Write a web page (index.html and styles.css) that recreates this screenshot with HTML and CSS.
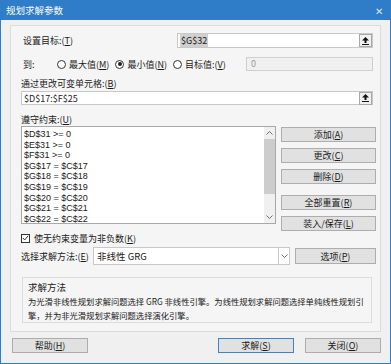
FILE: index.html
```html
<!DOCTYPE html>
<html lang="zh-CN">
<head>
    <meta charset="UTF-8">
    <title>规划求解参数</title>
    <link rel="stylesheet" href="styles.css">
</head>
<body>
    <div class="window">
        <div class="titlebar">
            <span class="title">规划求解参数</span>
            <span class="close">✕</span>
        </div>
        <div class="panel">
            <div class="row target-row">
                <label class="label">设置目标:(<u>T</u>)</label>
                <div class="ref-input target-input">
                    <span class="selected">$G$32</span>
                    <span class="ref-btn"><svg width="7" height="8" viewBox="0 0 7 8"><path d="M3.5 0 L7 3.5 L4.5 3.5 L4.5 6 L2.5 6 L2.5 3.5 L0 3.5 Z M0 7 H7 V8 H0 Z" fill="#111"/></svg></span>
                </div>
            </div>
            <div class="row to-row">
                <span class="label to-label">到:</span>
                <span class="radio"><span class="circle"></span><span>最大值(<u>M</u>)</span></span>
                <span class="radio"><span class="circle checked"></span><span>最小值(<u>N</u>)</span></span>
                <span class="radio"><span class="circle"></span><span>目标值:(<u>V</u>)</span></span>
                <div class="value-input">0</div>
            </div>
            <div class="label section-label">通过更改可变单元格:(<u>B</u>)</div>
            <div class="ref-input cells-input">
                <span>$D$17:$F$25</span>
                <span class="ref-btn"><svg width="7" height="8" viewBox="0 0 7 8"><path d="M3.5 0 L7 3.5 L4.5 3.5 L4.5 6 L2.5 6 L2.5 3.5 L0 3.5 Z M0 7 H7 V8 H0 Z" fill="#111"/></svg></span>
            </div>
            <div class="label section-label constraint-label">遵守约束:(<u>U</u>)</div>
            <div class="constraints">
                <div class="listbox">
                    <div class="items">
                        <div>$D$31 &gt;= 0</div>
                        <div>$E$31 &gt;= 0</div>
                        <div>$F$31 &gt;= 0</div>
                        <div>$G$17 = $C$17</div>
                        <div>$G$18 = $C$18</div>
                        <div>$G$19 = $C$19</div>
                        <div>$G$20 = $C$20</div>
                        <div>$G$21 = $C$21</div>
                        <div>$G$22 = $C$22</div>
                    </div>
                    <div class="scrollbar">
                        <span class="arrow"><svg width="7" height="4" viewBox="0 0 7 4"><path d="M0.5 3.5 L3.5 0.5 L6.5 3.5" stroke="#606060" stroke-width="0.9" fill="none"/></svg></span>
                        <span class="thumb"></span>
                        <span class="arrow"><svg width="7" height="4" viewBox="0 0 7 4"><path d="M0.5 0.5 L3.5 3.5 L6.5 0.5" stroke="#606060" stroke-width="0.9" fill="none"/></svg></span>
                    </div>
                </div>
                <div class="side-buttons">
                    <button class="btn">添加(<u>A</u>)</button>
                    <button class="btn">更改(<u>C</u>)</button>
                    <button class="btn">删除(<u>D</u>)</button>
                    <button class="btn gap-top">全部重置(<u>R</u>)</button>
                    <button class="btn">装入/保存(<u>L</u>)</button>
                </div>
            </div>
            <div class="row check-row">
                <span class="checkbox"><svg width="8" height="8" viewBox="0 0 8 8"><path d="M1 4 L3 6.2 L7 1.5" stroke="#222" stroke-width="1.1" fill="none"/></svg></span>
                <span class="label">使无约束变量为非负数(<u>K</u>)</span>
            </div>
            <div class="row method-row">
                <span class="label">选择求解方法:(<u>E</u>)</span>
                <div class="select">
                    <span>非线性 GRG</span>
                    <span class="drop"><svg width="7" height="4" viewBox="0 0 7 4"><path d="M0.5 0.5 L3.5 3.5 L6.5 0.5" stroke="#555" stroke-width="0.9" fill="none"/></svg></span>
                </div>
                <button class="btn options-btn">选项(<u>P</u>)</button>
            </div>
            <div class="group">
                <div class="group-title">求解方法</div>
                <p class="group-text">为光滑非线性规划求解问题选择 GRG 非线性引擎。为线性规划求解问题选择单纯线性规划引擎，并为非光滑规划求解问题选择演化引擎。</p>
            </div>
        </div>
        <div class="footer">
            <button class="btn footer-btn">帮助(<u>H</u>)</button>
            <div class="footer-right">
                <button class="btn footer-btn default">求解(<u>S</u>)</button>
                <button class="btn footer-btn">关闭(<u>O</u>)</button>
            </div>
        </div>
    </div>
</body>
</html>
```

FILE: styles.css
```css
body {
    margin: 0;
    font-family: "Noto Sans CJK SC", "Noto Sans", sans-serif;
    font-size: 9px;
    color: #1a1a1a;
    background-color: #f0f0f0;
}
u {
    text-decoration: underline;
}
.window {
    width: 391px;
    height: 364px;
    box-sizing: border-box;
    background-color: #f0f0f0;
    border: 1px solid #2f7dc8;
    border-top: none;
}
.titlebar {
    height: 20px;
    margin: 0 -1px;
    background-color: #2f7dc8;
    color: #fff;
    display: flex;
    align-items: center;
    justify-content: space-between;
    padding: 0 8px 0 6px;
    font-size: 9.5px;
}
.close {
    font-size: 10px;
    color: #dbe8f5;
}
.panel {
    margin: 5px 9px 0 9px;
    height: 307px;
    box-sizing: border-box;
    border: 1px solid #dcdcdc;
    background-color: #f5f5f5;
    padding: 7px 7px 0 10px;
}
.row {
    display: flex;
    align-items: center;
}
.label {
    white-space: nowrap;
}
.target-row {
    height: 15px;
    padding-left: 2px;
}
.target-row .label {
    width: 154px;
}
.ref-input {
    flex: 1;
    height: 15px;
    box-sizing: border-box;
    background-color: #fff;
    border: 1px solid #c8c8c8;
    display: flex;
    align-items: center;
    justify-content: space-between;
    padding-left: 2px;
}
.selected {
    background-color: #d0d0d0;
    padding: 0 1px;
}
.ref-btn {
    width: 13px;
    height: 13px;
    box-sizing: border-box;
    border: 1px solid #a8a8a8;
    background-color: #f0f0f0;
    display: flex;
    align-items: center;
    justify-content: center;
}
.to-row {
    height: 14px;
    margin-top: 9px;
    padding-left: 2px;
}
.to-label {
    width: 34px;
}
.radio {
    display: flex;
    align-items: center;
    gap: 3px;
    margin-right: 6px;
    white-space: nowrap;
}
.circle {
    width: 9px;
    height: 9px;
    box-sizing: border-box;
    border: 1px solid #333;
    border-radius: 50%;
    background-color: #fff;
    position: relative;
}
.circle.checked::after {
    content: "";
    position: absolute;
    left: 1.5px;
    top: 1.5px;
    width: 4px;
    height: 4px;
    border-radius: 50%;
    background-color: #222;
}
.value-input {
    margin-left: auto;
    width: 127px;
    height: 14px;
    box-sizing: border-box;
    border: 1px solid #cfcfcf;
    background-color: #f0f0f0;
    color: #999;
    padding-left: 4px;
    line-height: 12px;
}
.section-label {
    margin-top: 6px;
    height: 13px;
    line-height: 13px;
}
.cells-input {
    margin-top: 1px;
    height: 14px;
}
.constraint-label {
    margin-top: 8px;
}
.constraints {
    display: flex;
    justify-content: space-between;
    margin-top: 0;
    margin-right: -3px;
}
.listbox {
    width: 255px;
    height: 98px;
    box-sizing: border-box;
    border: 1px solid #a8a8a8;
    background-color: #fff;
    display: flex;
    overflow: hidden;
}
.items {
    flex: 1;
    padding: 2px 0 0 2px;
    font-family: "Liberation Sans", "Noto Sans", sans-serif;
    font-size: 9px;
}
.items div {
    height: 10.6px;
    line-height: 10.6px;
}
.scrollbar {
    width: 11px;
    background-color: #f0f0f0;
    display: flex;
    flex-direction: column;
    align-items: center;
}
.arrow {
    height: 12px;
    display: flex;
    align-items: center;
}
.thumb {
    width: 100%;
    height: 55px;
    background-color: #cdcdcd;
    margin-bottom: auto;
}
.side-buttons {
    display: flex;
    flex-direction: column;
    gap: 6px;
    padding-top: 1px;
}
.btn {
    font-family: inherit;
    font-size: 9px;
    color: #1a1a1a;
    background-color: #e1e1e1;
    border: 1px solid #adadad;
    padding: 0;
    height: 15px;
    line-height: 13px;
    width: 95px;
    box-sizing: border-box;
}
.side-buttons .btn.gap-top {
    margin-top: 5px;
}
.check-row {
    margin-top: 0;
    height: 14px;
    gap: 4px;
}
.checkbox {
    width: 9px;
    height: 9px;
    box-sizing: border-box;
    border: 1px solid #333;
    background-color: #fff;
    display: flex;
    align-items: center;
    justify-content: center;
}
.method-row {
    margin-top: 2px;
    height: 18px;
}
.method-row .label {
    width: 72px;
}
.select {
    width: 197px;
    height: 18px;
    box-sizing: border-box;
    border: 1px solid #c8c8c8;
    background-color: #fff;
    display: flex;
    align-items: center;
    justify-content: space-between;
    padding-left: 3px;
    font-size: 9.5px;
}
.drop {
    width: 10px;
    height: 16px;
    border-left: 1px solid #c8c8c8;
    display: flex;
    align-items: center;
    justify-content: center;
}
.options-btn {
    margin-left: 5px;
    width: 81px;
    height: 16px;
    margin-right: -3px;
}
.group {
    margin: 12px 1px 0 1px;
    height: 46px;
    box-sizing: border-box;
    border: 1px solid #dcdcdc;
    padding: 3px 5px 0 5px;
}
.group-title {
    font-size: 9.5px;
    line-height: 12px;
}
.group-text {
    margin: 1px 0 0 0;
    font-size: 8.3px;
    line-height: 14px;
}
.footer {
    display: flex;
    justify-content: space-between;
    padding: 6px 9px 0 11px;
}
.footer-right {
    display: flex;
    gap: 11px;
}
.footer-btn {
    width: 76px;
    height: 15px;
}
.footer-btn.default {
    border-color: #3c84d0;
}
```
